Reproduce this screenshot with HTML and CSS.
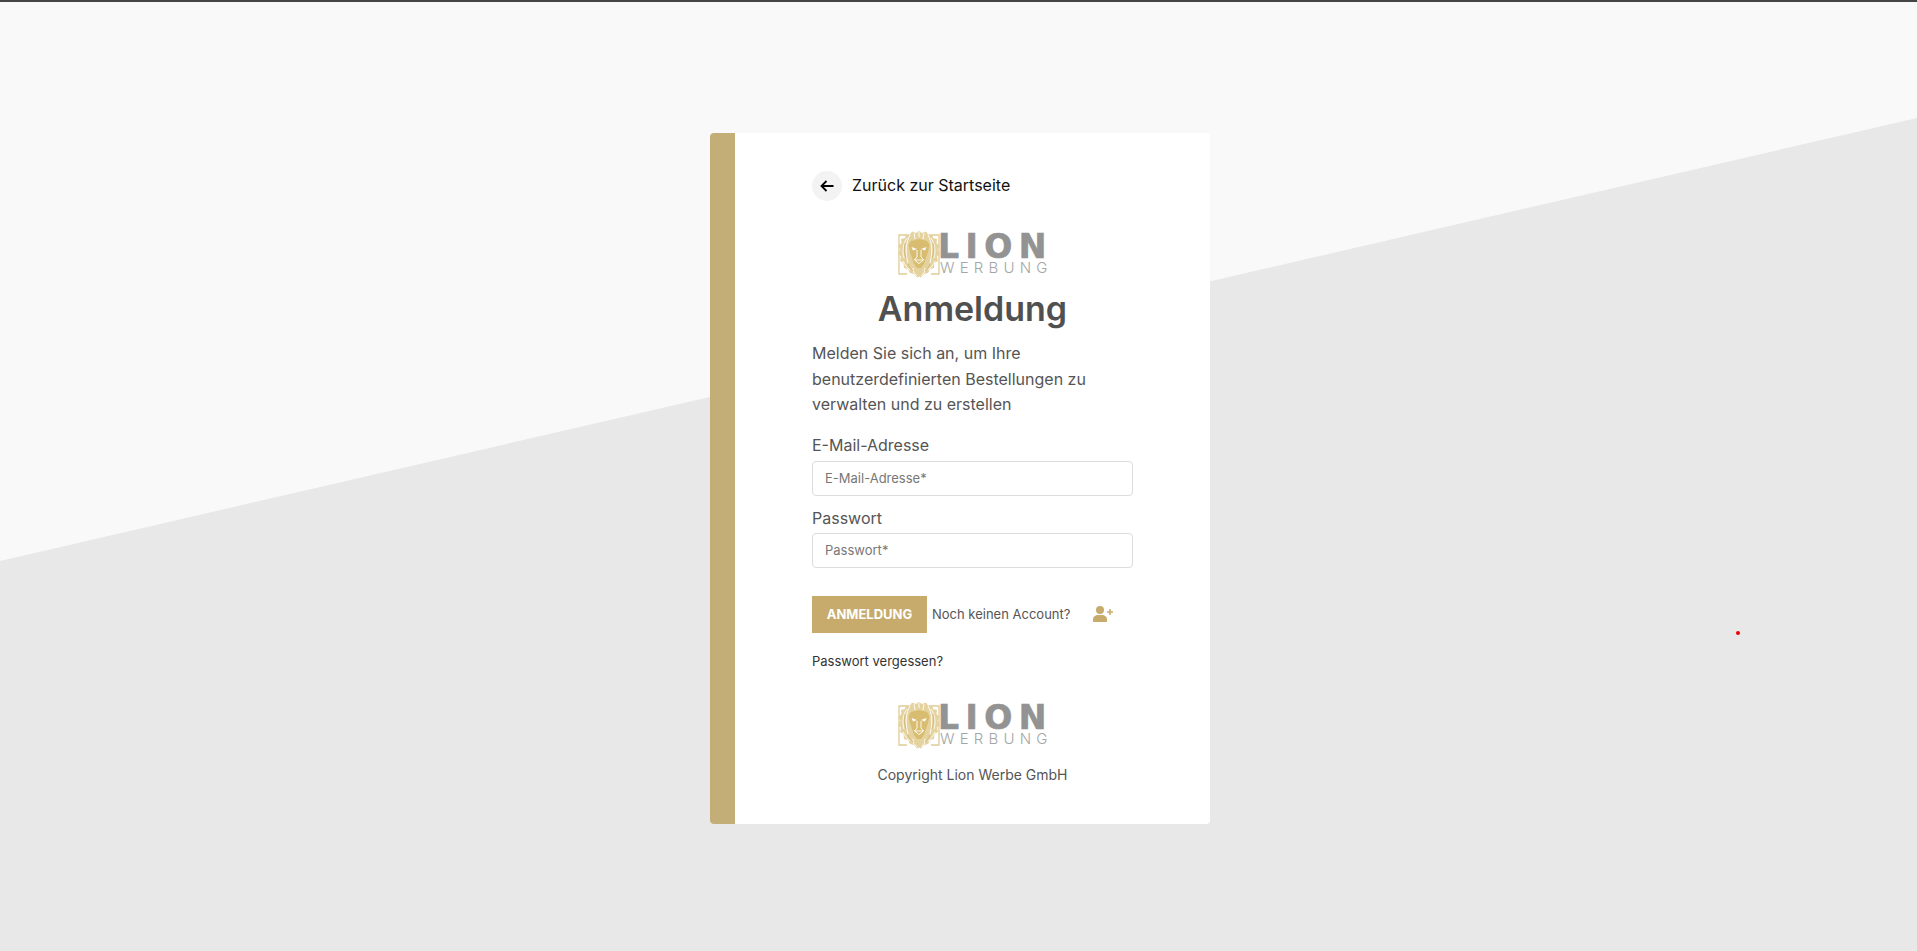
FILE: index.html

```html
<!DOCTYPE html>
<html lang="de">

<head>
  <meta charset="UTF-8">
  <title>Anmeldung</title>
  <link rel="stylesheet" href="styles.css">
</head>

<body>
  <svg class="defs" width="0" height="0">
    <symbol id="lion" viewBox="0 0 42 48">
      <!-- frame -->
      <path d="M9 5H1V44H9M33 5H41V44H33" fill="none" stroke="#e0cc96" stroke-width="1.300" />
      <!-- mane -->
      <path d="M21 1L24 3L28 1.500L30 4.500L34 4L35 8L39 9L38.500 13L42 16L39.500 19.500L42 24L39 26.500L40 31L36.500 33L36 38L32 39L30 43L26 44L23 47.500L21 46.500L19 47.500L16 44L12 43L10 39L6 38L5.500 33L2 31L3 26.500L0 24L2.500 19.500L0 16L3.500 13L3 9L7 8L8 4L12 4.500L14 1.500L18 3Z" fill="#e4d29f" />
      <path d="M9 8C5 14 4 21 6 28M33 8C37 14 38 21 36 28M12 5C8 12 7 22 10 33M30 5C34 12 35 22 32 33M5 31C7 35 9 38 12 40M37 31C35 35 33 38 30 40M15 38C15 41 16 44 19 46M27 38C27 41 26 44 23 46M21 2V7M16 3L17 9M26 3L25 9" fill="none" stroke="#fff" stroke-width=".9" />
      <path d="M7 13C6 18 6 23 8 28M35 13C36 18 36 23 34 28M10 34C11 37 13 39 15 41M32 34C31 37 29 39 27 41" fill="none" stroke="#cfb470" stroke-width=".8" />
      <!-- face -->
      <path d="M13 11L21 9L29 11L31.500 15L30 22L28 28L26 34L23 38H19L16 34L14 28L12 22L10.500 15Z" fill="#d8bc70" />
      <path d="M13.500 17L19 19L15 20.500ZM28.500 17L23 19L27 20.500Z" fill="#fff" />
      <path d="M19 20V27L16.500 30M23 20V27L25.500 30M16.500 30H25.500L21 33.500Z" fill="none" stroke="#fff" stroke-width=".9" />
    </symbol>
  </svg>

  <div class="page">
    <div class="card">
      <div class="card-side"></div>
      <div class="card-body">

        <a class="back" href="#">
          <span class="back-circle">
            <svg width="14" height="14" viewBox="0 0 14 14">
              <path d="M13.500 7H1.500M6.500 2L1.500 7L6.500 12" fill="none" stroke="#000" stroke-width="1.800" />
            </svg>
          </span>
          Zurück zur Startseite
        </a>

        <div class="logo">
          <svg class="logo-lion" width="42" height="48"><use href="#lion" /></svg>
          <div class="logo-text">
            <div class="logo-big">LION</div>
            <div class="logo-small">WERBUNG</div>
          </div>
        </div>

        <h1 class="title">Anmeldung</h1>
        <p class="intro">Melden Sie sich an, um Ihre benutzerdefinierten Bestellungen zu verwalten und zu erstellen</p>

        <label class="label" for="email">E-Mail-Adresse</label>
        <input class="input" id="email" type="text" placeholder="E-Mail-Adresse*">
        <label class="label" for="pass">Passwort</label>
        <input class="input input-pass" id="pass" type="password" placeholder="Passwort*">

        <div class="actions">
          <button class="btn">ANMELDUNG</button>
          <a class="signup" href="#">Noch keinen Account?</a>
          <svg class="signup-icon" width="20" height="16" viewBox="0 0 20 16">
            <circle cx="7" cy="4" r="4" fill="#c6ab6d" />
            <path d="M0 16V13.500C0 10.500 2.500 9 5 9H9C11.500 9 14 10.500 14 13.500V16Z" fill="#c6ab6d" />
            <path d="M17 3V9M14 6H20" stroke="#c6ab6d" stroke-width="1.500" />
          </svg>
        </div>

        <a class="forgot" href="#">Passwort vergessen?</a>

        <div class="logo logo-foot">
          <svg class="logo-lion" width="42" height="48"><use href="#lion" /></svg>
          <div class="logo-text">
            <div class="logo-big">LION</div>
            <div class="logo-small">WERBUNG</div>
          </div>
        </div>

        <div class="copyright">Copyright Lion Werbe GmbH</div>
      </div>
    </div>
  </div>
  <div class="dot"></div>
</body>

</html>
```

FILE: styles.css

```css
* {
  box-sizing: border-box;
  font-family: 'Inter', 'Liberation Sans', sans-serif;
  margin: 0;
  padding: 0;
}

body {
  height: 951px;
  overflow: hidden;
  background: #f9f9f9;
  border-top: 2px solid #454545;
}

/* grey diagonal behind the card */
body::before {
  content: '';
  position: absolute;
  top: 0;
  left: 0;
  width: 100%;
  height: 951px;
  background: #e8e8e8;
  clip-path: polygon(0 561px, 100% 118px, 100% 100%, 0 100%);
}

.defs {
  position: absolute;
}

.page {
  position: relative;
  display: flex;
  justify-content: center;
  padding-top: 131px;
  padding-left: 3px;
}

.card {
  display: flex;
  width: 500px;
  height: 691px;
  background: #fff;
  border-radius: 4px;
  overflow: hidden;
}

.card-side {
  width: 25px;
  background: #c4ae77;
}

.card-body {
  flex: 1;
  padding: 36px 77px 0;
}

.back {
  display: flex;
  align-items: center;
  gap: 10px;
  height: 32px;
  font-size: 16px;
  color: #111;
  text-decoration: none;
}

.back-circle {
  display: flex;
  align-items: center;
  justify-content: center;
  width: 30px;
  height: 30px;
  margin-top: 2px;
  background: #f3f3f3;
  border-radius: 50%;
}

.logo {
  display: flex;
  justify-content: center;
  height: 48px;
  margin-top: 29px;
  padding-left: 3px;
}

.logo-lion {
  filter: blur(.3px);
}

.logo-text {
  width: 110px;
  padding-top: 5px;
  white-space: nowrap;
}

.logo-big {
  margin-left: -2px;
  font-family: 'DejaVu Sans', sans-serif;
  font-size: 33px;
  line-height: 24px;
  font-weight: 700;
  letter-spacing: 6.500px;
  color: #939393;
  -webkit-text-stroke: .7px #939393;
}

.logo-small {
  margin-top: 3px;
  font-size: 15px;
  line-height: 11px;
  font-weight: 300;
  letter-spacing: 5.200px;
  color: #a5a5a5;
}

.title {
  margin-top: 10px;
  font-size: 34px;
  line-height: 41px;
  font-weight: 600;
  color: #505050;
  text-align: center;
}

.intro {
  margin-top: 12px;
  font-size: 16px;
  line-height: 25.600px;
  color: #555;
}

.label {
  display: block;
  font-size: 16px;
  line-height: 22px;
  color: #555;
}

.intro + .label {
  margin-top: 16px;
}

.input {
  display: block;
  width: 100%;
  height: 35px;
  margin-top: 5px;
  margin-bottom: 11px;
  padding: 0 12px;
  font-size: 13px;
  color: #555;
  background: #fff;
  border: 1px solid #dcdcdc;
  border-radius: 4px;
  outline: none;
}

.input-pass {
  margin-top: 4px;
}

.input::placeholder {
  color: #777;
  opacity: 1;
}

.actions {
  display: flex;
  align-items: center;
  margin-top: 28px;
}

.btn {
  width: 115px;
  height: 37px;
  font-size: 13px;
  font-weight: 700;
  color: #fff;
  background: #c6ab6d;
  border: none;
}

.signup {
  margin-left: 5px;
  font-size: 13px;
  color: #555;
  text-decoration: none;
}

.signup-icon {
  margin-left: 23px;
}

.forgot {
  display: block;
  margin-top: 19px;
  font-size: 13px;
  line-height: 19px;
  color: #333;
  text-decoration: none;
}

.logo-foot {
  margin-top: 30px;
}

.copyright {
  margin-top: 16px;
  font-size: 14px;
  line-height: 20px;
  color: #555;
  text-align: center;
}

.dot {
  position: absolute;
  top: 631px;
  left: 1736px;
  width: 4px;
  height: 4px;
  background: #e00;
  border-radius: 50%;
}
```
